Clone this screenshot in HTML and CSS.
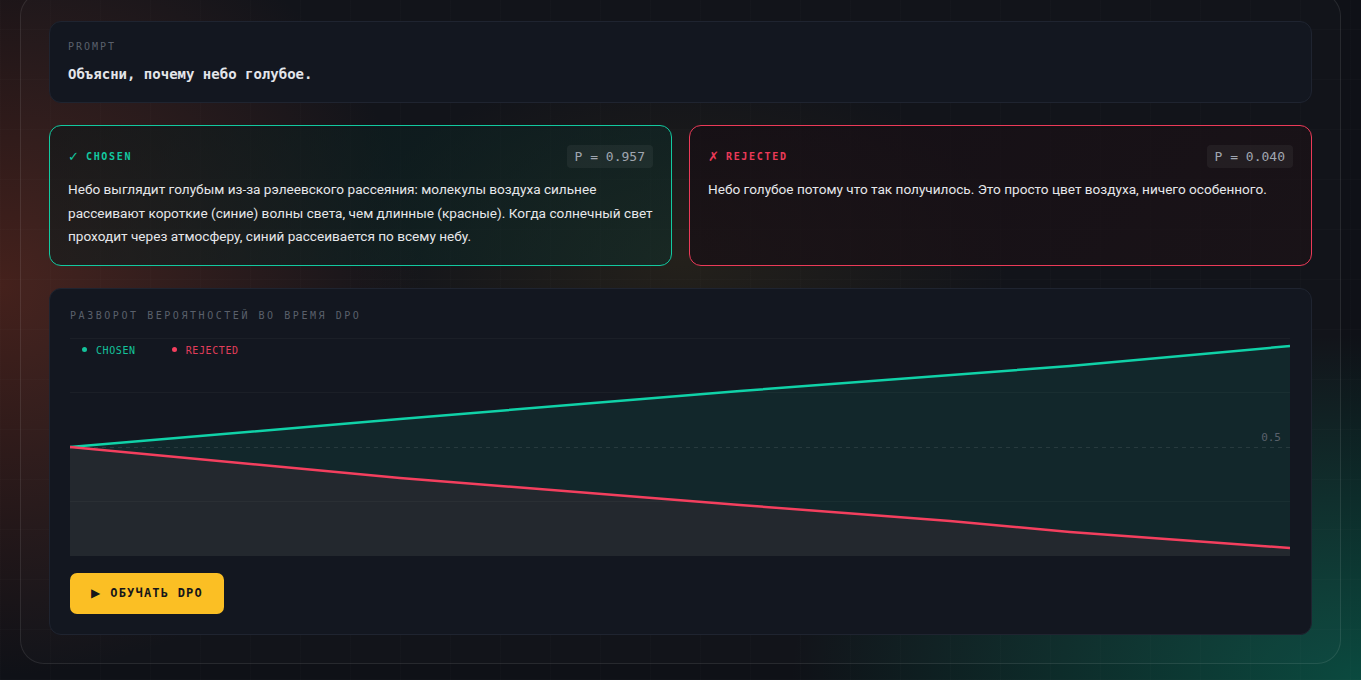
FILE: index.html
```html
<!DOCTYPE html>
<html lang="ru">
<head>
  <meta charset="UTF-8" />
  <meta name="viewport" content="width=device-width, initial-scale=1.0" />
  <title>DPO — разворот вероятностей</title>
  <link rel="stylesheet" href="styles.css">
</head>
<body>
  <div class="panel">
    <div class="prompt">
      <div class="label">PROMPT</div>
      <div class="prompt-text">Объясни, почему небо голубое.</div>
    </div>

    <div class="pair">
      <div class="answer chosen">
        <div class="answer-head">
          <span class="tag"><span class="mark">✓</span>CHOSEN</span>
          <span class="prob">P = 0.957</span>
        </div>
        <p>Небо выглядит голубым из-за рэлеевского рассеяния: молекулы воздуха сильнее рассеивают короткие (синие) волны света, чем длинные (красные). Когда солнечный свет проходит через атмосферу, синий рассеивается по всему небу.</p>
      </div>
      <div class="answer rejected">
        <div class="answer-head">
          <span class="tag"><span class="mark">✗</span>REJECTED</span>
          <span class="prob">P = 0.040</span>
        </div>
        <p>Небо голубое потому что так получилось. Это просто цвет воздуха, ничего особенного.</p>
      </div>
    </div>

    <div class="chart-card">
      <div class="chart-title">РАЗВОРОТ ВЕРОЯТНОСТЕЙ ВО ВРЕМЯ DPO</div>
      <div class="chart">
        <svg width="1220" height="218" viewBox="0 0 1220 218">
          <line class="grid" x1="0" y1="0.5" x2="1220" y2="0.5" />
          <line class="grid" x1="0" y1="54.5" x2="1220" y2="54.5" />
          <line class="grid" x1="0" y1="163.5" x2="1220" y2="163.5" />
          <polygon class="fill-chosen" points="0,109 330,81 670,53 1000,28 1220,8 1220,218 0,218" />
          <polygon class="fill-rejected" points="0,109 330,140 670,167 880,183 1000,194 1220,210 1220,218 0,218" />
          <line class="mid" x1="0" y1="109.5" x2="1220" y2="109.5" />
          <polyline class="line-chosen" points="0,109 330,81 670,53 1000,28 1220,8" />
          <polyline class="line-rejected" points="0,109 330,140 670,167 880,183 1000,194 1220,210" />
        </svg>
        <div class="legend">
          <span class="key key-chosen">CHOSEN</span>
          <span class="key key-rejected">REJECTED</span>
        </div>
        <div class="mid-label">0.5</div>
      </div>
      <button class="train"><span class="play">▶</span>ОБУЧАТЬ DPO</button>
    </div>
  </div>
</body>
</html>
```

FILE: styles.css
```css
html, body {
  height: 100%;
}
body {
  margin: 0;
  padding: 0 20px;
  overflow: hidden;
  font-family: Roboto, "Noto Sans", sans-serif;
  color: #e5e7eb;
  background:
    repeating-linear-gradient(90deg, rgba(255,255,255,0.012) 0 1px, transparent 1px 50px),
    repeating-linear-gradient(0deg, rgba(255,255,255,0.012) 0 1px, transparent 1px 50px),
    radial-gradient(ellipse 560px 520px at 0% 42%, rgba(112,46,32,0.55), transparent 75%),
    radial-gradient(ellipse 760px 460px at 100% 100%, rgba(8,112,90,0.6), transparent 75%),
    radial-gradient(ellipse 440px 260px at 50% 38%, rgba(140,105,30,0.14), transparent 75%),
    #0f1117;
}
.panel {
  margin-top: -8px;
  padding: 28px;
  border: 1px solid rgba(255,255,255,0.09);
  border-radius: 24px;
  background: rgba(255,255,255,0.015);
  display: flex;
  flex-direction: column;
  gap: 22px;
}

.prompt {
  background: #131720;
  border: 1px solid #1f2430;
  border-radius: 12px;
  padding: 18px 18px;
}
.label {
  font-family: "DejaVu Sans Mono", monospace;
  font-size: 10px;
  line-height: 14px;
  letter-spacing: 2px;
  color: #5a606b;
}
.prompt-text {
  margin-top: 10px;
  font-family: "DejaVu Sans Mono", monospace;
  font-size: 14px;
  font-weight: bold;
  line-height: 20px;
  color: #e3e5ea;
}

.pair {
  display: grid;
  grid-template-columns: 1fr 1fr;
  gap: 17px;
}
.answer {
  border-radius: 12px;
  padding: 19px 18px 16px;
  border: 1px solid;
}
.chosen {
  border-color: #12c9a0;
  background: linear-gradient(135deg, rgba(10,22,24,0.55), rgba(14,48,44,0.5));
}
.rejected {
  border-color: #ec3a58;
  background: linear-gradient(135deg, rgba(22,14,20,0.75), rgba(30,18,22,0.6));
}
.answer-head {
  display: flex;
  justify-content: space-between;
  align-items: center;
}
.tag {
  font-family: "DejaVu Sans Mono", monospace;
  font-size: 10px;
  font-weight: bold;
  letter-spacing: 1.7px;
  display: flex;
  align-items: center;
}
.mark {
  font-family: "DejaVu Sans", sans-serif;
  font-size: 13px;
  font-weight: normal;
  letter-spacing: 0;
  margin-right: 7px;
}
.chosen .tag { color: #12c9a0; }
.rejected .tag { color: #ec3a58; }
.prob {
  font-family: "DejaVu Sans Mono", monospace;
  font-size: 13px;
  line-height: 15px;
  padding: 4px 8px;
  border-radius: 4px;
  background: rgba(255,255,255,0.05);
  color: #a0a6b0;
}
.answer p {
  margin: 10px 0 0;
  font-size: 13.6px;
  line-height: 23.5px;
  color: #e6e7ea;
}

.chart-card {
  background: #131720;
  border: 1px solid #1f2430;
  border-radius: 12px;
  padding: 20px;
}
.chart-title {
  font-family: "DejaVu Sans Mono", monospace;
  font-size: 10px;
  line-height: 14px;
  letter-spacing: 2.55px;
  color: #5a606b;
}
.chart {
  position: relative;
  margin-top: 15px;
  height: 218px;
}
.chart svg {
  display: block;
}
.grid {
  stroke: rgba(255,255,255,0.035);
  stroke-width: 1;
}
.mid {
  stroke: rgba(255,255,255,0.09);
  stroke-width: 1;
  stroke-dasharray: 4 4;
}
.fill-chosen { fill: rgba(16,210,168,0.085); }
.fill-rejected { fill: rgba(244,63,94,0.08); }
.line-chosen, .line-rejected {
  fill: none;
  stroke-width: 2.5;
  stroke-linejoin: round;
}
.line-chosen { stroke: #10d2a8; }
.line-rejected { stroke: #f43f5e; }

.legend {
  position: absolute;
  top: 6px;
  left: 12px;
  display: flex;
  gap: 36px;
  font-family: "DejaVu Sans Mono", monospace;
  font-size: 10px;
  line-height: 14px;
  letter-spacing: 0.6px;
}
.key::before {
  content: "";
  display: inline-block;
  width: 5px;
  height: 5px;
  border-radius: 50%;
  margin-right: 9px;
  vertical-align: 2px;
}
.key-chosen { color: #14c29b; }
.key-chosen::before { background: #14c29b; }
.key-rejected { color: #e23e5b; }
.key-rejected::before { background: #f43f5e; }
.mid-label {
  position: absolute;
  right: 10px;
  top: 93px;
  font-family: "DejaVu Sans Mono", monospace;
  font-size: 11px;
  line-height: 14px;
  color: #5a616b;
}

.train {
  margin-top: 17px;
  padding: 13px 21px;
  border: none;
  border-radius: 7px;
  background: #fbbf24;
  color: #15161a;
  font-family: "DejaVu Sans Mono", monospace;
  font-size: 12px;
  font-weight: bold;
  line-height: 15px;
  letter-spacing: 1.2px;
  cursor: pointer;
  display: flex;
  align-items: center;
}
.play {
  font-family: "DejaVu Sans", sans-serif;
  font-size: 12px;
  letter-spacing: 0;
  margin-right: 10px;
}
```
